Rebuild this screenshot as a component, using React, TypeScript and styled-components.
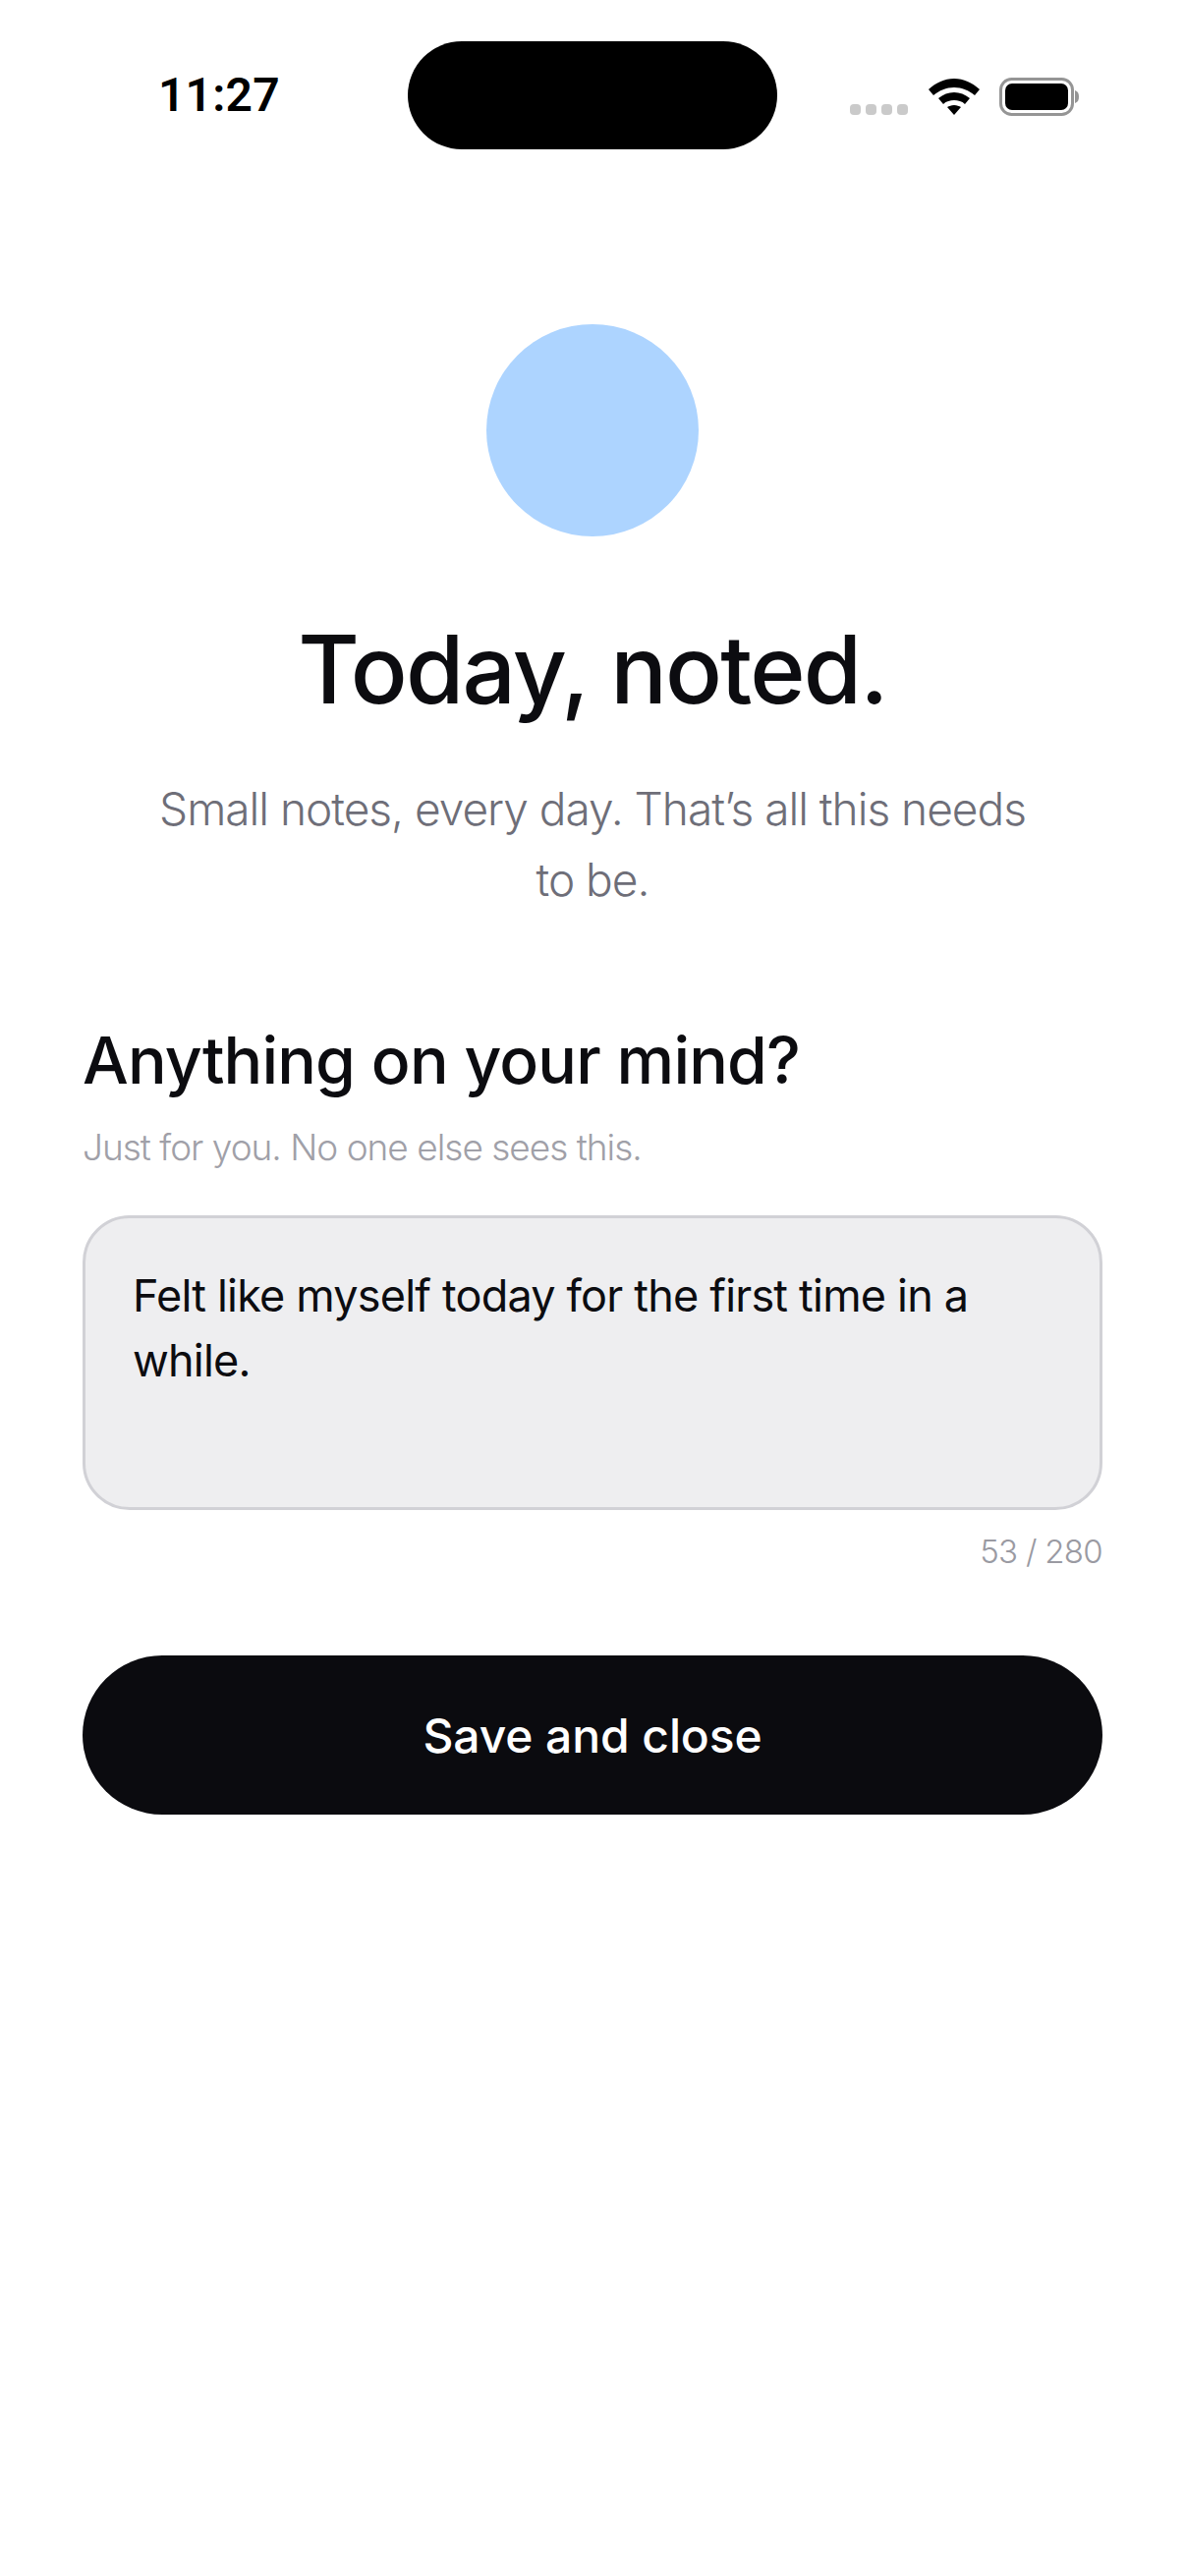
import React from "react";
import styled, { createGlobalStyle } from "styled-components";

const Global = createGlobalStyle`
  html, body { margin: 0; padding: 0; background: #fff; }
  * { box-sizing: border-box; }
`;

const Screen = styled.div`
  width: 1206px;
  height: 2622px;
  background: #fff;
  font-family: Inter, "Noto Sans", sans-serif;
  overflow: hidden;
`;

const StatusBar = styled.div`
  height: 330px;
  padding: 42px 107px 0 161px;
  display: flex;
  align-items: flex-start;
`;

const Time = styled.div`
  width: 254px;
  margin-top: 29px;
  font-family: Roboto, sans-serif;
  font-weight: 600;
  font-size: 48px;
  line-height: 52px;
  letter-spacing: 0.2px;
  color: #000;
`;

const Island = styled.div`
  width: 376px;
  height: 110px;
  background: #000;
  border-radius: 55px;
`;

const StatusIcons = styled.div`
  width: 234px;
  margin-top: 36px;
  margin-left: auto;
  display: flex;
  align-items: center;
  justify-content: space-between;
`;

const SignalDots = styled.svg`
  margin-top: 26px;
`;

const Hero = styled.section`
  display: flex;
  flex-direction: column;
  align-items: center;
`;

const Circle = styled.div`
  width: 216px;
  height: 216px;
  border-radius: 50%;
  background: #add4ff;
`;

const Title = styled.h1`
  margin: 75px 0 0;
  font-size: 96px;
  line-height: 120px;
  font-weight: 500;
  letter-spacing: -1.8px;
  color: #0c0c10;
`;

const Subtitle = styled.p`
  margin: 46px 0 0;
  width: 920px;
  text-align: center;
  font-size: 46px;
  line-height: 72px;
  font-weight: 300;
  letter-spacing: -1px;
  color: #6e6e78;
`;

const Form = styled.section`
  margin-top: 106px;
  padding: 0 84px;
`;

const Heading = styled.h2`
  margin: 0;
  font-size: 66px;
  line-height: 84px;
  font-weight: 500;
  letter-spacing: -0.85px;
  color: #0c0c10;
`;

const Hint = styled.p`
  margin: 22px 0 0;
  font-size: 37px;
  line-height: 50px;
  font-weight: 300;
  letter-spacing: -1px;
  color: #a0a0a8;
`;

const NoteBox = styled.div`
  margin-top: 44px;
  height: 300px;
  padding: 46px 48px 0;
  background: #eeeef0;
  border: 3px solid #d1d1d6;
  border-radius: 48px;
  font-size: 45px;
  line-height: 66px;
  font-weight: 400;
  letter-spacing: -0.8px;
  color: #0c0c10;
`;

const Counter = styled.div`
  margin-top: 20px;
  text-align: right;
  font-size: 33px;
  line-height: 44px;
  font-weight: 300;
  letter-spacing: -0.7px;
  color: #9a9aa2;
`;

const SaveButton = styled.button`
  display: block;
  width: 100%;
  height: 162px;
  margin-top: 84px;
  border: none;
  border-radius: 81px;
  background: #0b0b0f;
  color: #fff;
  font-family: inherit;
  font-size: 48px;
  font-weight: 500;
  letter-spacing: -0.1px;
`;

export default function App() {
  return (
    <Screen>
      <Global />
      <StatusBar>
        <Time>11:27</Time>
        <Island />
        <StatusIcons>
          <SignalDots width="60" height="16" viewBox="0 0 60 16">
            {[0, 16, 32, 48].map((x) => (
              <rect key={x} x={x} y="2" width="11" height="11" rx="4" fill="#cacaca" />
            ))}
          </SignalDots>
          <svg width="52" height="38" viewBox="0 0 52 38">
            <path d="M26 0C16 0 8 4 0 11l5 6c6-5 13-8 21-8s15 3 21 8l5-6C44 4 36 0 26 0z" fill="#000" />
            <path d="M26 14c-6 0-11 2-16 6l5 6c3-3 7-4 11-4s8 1 11 4l5-6c-5-4-10-6-16-6z" fill="#000" />
            <path d="M26 27c-3 0-5 1-7 2l7 8 7-8c-2-1-4-2-7-2z" fill="#000" />
          </svg>
          <svg width="82" height="40" viewBox="0 0 82 40">
            <rect x="1.500" y="1.500" width="73" height="36" rx="11" fill="none" stroke="#959595" strokeWidth="3" />
            <rect x="6" y="6" width="64" height="27" rx="7" fill="#000" />
            <path d="M77 13c3 1 4 3 4 6.500s-1 5.500-4 6.500z" fill="#959595" />
          </svg>
        </StatusIcons>
      </StatusBar>
      <Hero>
        <Circle />
        <Title>Today, noted.</Title>
        <Subtitle>Small notes, every day. That’s all this needs to be.</Subtitle>
      </Hero>
      <Form>
        <Heading>Anything on your mind?</Heading>
        <Hint>Just for you. No one else sees this.</Hint>
        <NoteBox>Felt like myself today for the first time in a while.</NoteBox>
        <Counter>53 / 280</Counter>
        <SaveButton>Save and close</SaveButton>
      </Form>
    </Screen>
  );
}
